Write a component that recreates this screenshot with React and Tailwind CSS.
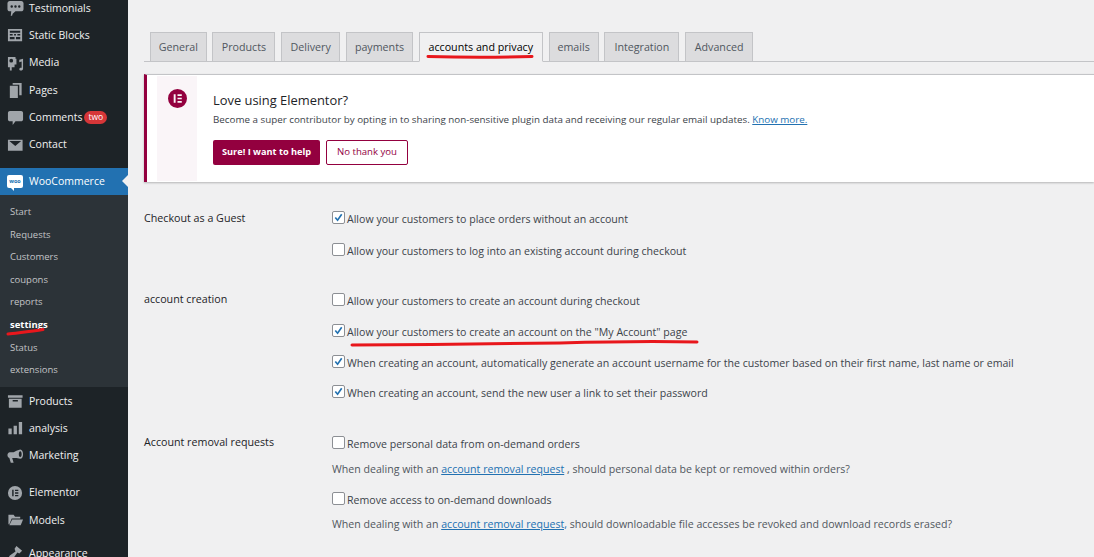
const FONT = "font-['Open_Sans','Noto_Sans',sans-serif]";

const icons = {
  testimonials: (
    <path d="M3 1h12c1.500 0 2.500 1 2.500 2.500v6C17.500 11 16.500 12 15 12H9l-3 2.500-.5 2-1.500.5.500-5H3c-1.500 0-2.500-1-2.500-2.500v-6C.5 2 1.500 1 3 1zm2 4.500a1.300 1.300 0 100 2.600 1.300 1.300 0 000-2.600zm4 0a1.300 1.300 0 100 2.600 1.300 1.300 0 000-2.600zm4 0a1.300 1.300 0 100 2.600 1.300 1.300 0 000-2.600z" fillRule="evenodd" />
  ),
  blocks: (
    <path d="M1 2h15v13H1V2zm2 2v2h11V4H3zm0 3.500V9h3V7.500H3zm4.500 0V9h2V7.500h-2zm3.500 0V9h3V7.500h-3zM3 10.500V13h5v-2.500H3zm6.500 0V13H14v-2.500H9.500z" fillRule="evenodd" />
  ),
  media: (
    <path d="M1 2h8v2h1v6H8v3H5v3.500H3V13H1V2zm3.500 2a2 2 0 100 4 2 2 0 000-4zM13 5l4-1v10.500c0 1.200-1 2-2.200 2-1 0-1.800-.6-1.800-1.500s.8-1.500 1.800-1.500c.2 0 .4 0 .7.100V7l-2.500.6V5z" fillRule="evenodd" />
  ),
  pages: (
    <path d="M6 1h9.500v13H13V3H6V1zM3 4h8.500v13H3V4z" />
  ),
  comments: (
    <path d="M3 2h12c1 0 2 1 2 2v7c0 1-1 2-2 2H9l-3 4v-4H3c-1 0-2-1-2-2V4c0-1 1-2 2-2z" />
  ),
  contact: (
    <path d="M1 3h15.500v11.500H1V3zm1.500 1.300L8.750 9.500 15 4.300H2.500z" fillRule="evenodd" />
  ),
  products: (
    <path d="M1 2.500h15.500V5H1V2.500zM2 6h13.500v9.500H2V6zm4 1.500V9h5.500V7.500H6z" fillRule="evenodd" />
  ),
  analysis: (
    <path d="M1.500 9h3.500v6H1.500V9zM7 6h3.500v9H7V6zm5.500-4H16v13h-3.500V2z" />
  ),
  marketing: (
    <path d="M10 3l4-1.500c2 0 3 2.500 3 5s-1 5-3 5L10 10.500H5.500L7 15.500H4L2.500 10.500C1 10 .5 9 .5 7.500S1.500 4.500 3 4.500h4L10 3zm4 .5c-1 0-1.500 1.500-1.500 3s.5 3 1.500 3 1.500-1.500 1.500-3-.5-3-1.500-3z" fillRule="evenodd" />
  ),
  elementor: (
    <path d="M8.500 1a7.500 7.500 0 100 15 7.500 7.500 0 000-15zM5.500 5H7v7H5.500V5zm3 0H12v1.400H8.500V5zm0 2.800H12v1.400H8.500V7.800zm0 2.800H12V12H8.500v-1.400z" fillRule="evenodd" />
  ),
  models: (
    <path d="M1.500 3H7l1.500 2H14v2H5L2.500 13 1.500 13V3zM5.500 8H17l-2.500 6H2.500l3-6z" />
  ),
  appearance: (
    <path d="M10 1l6 5-3 3-2-1-5 7c-1 1-3 .5-3.500-.5S2 12 3 11l6-4-1-3 2-3z" />
  ),
};

function MenuIcon({ name }) {
  return (
    <svg viewBox="0 0 18 18" className="w-[17px] h-[17px] fill-[#a0a5aa] shrink-0">
      {icons[name]}
    </svg>
  );
}

function MenuItem({ icon, label, badge }) {
  return (
    <div className="h-[27.3px] flex items-center pl-[7px] gap-[5px] text-[#f0f0f1] text-[10.5px]">
      <MenuIcon name={icon} />
      <span>{label}</span>
      {badge && (
        <span className="bg-[#d63638] text-white text-[8.5px] leading-[12px] h-[13px] px-[4px] rounded-full -ml-[3px]">
          {badge}
        </span>
      )}
    </div>
  );
}

function SubItem({ label, active }) {
  return (
    <div className={`h-[22.6px] flex items-center pl-[10px] text-[9.5px] ${active ? "text-white font-bold" : "text-[#c3c4c7]"}`}>
      {label}
    </div>
  );
}

function Sidebar() {
  return (
    <div className="w-[128px] shrink-0 bg-[#1d2327] h-[562px] overflow-hidden -mt-[5px]">
      <MenuItem icon="testimonials" label="Testimonials" />
      <MenuItem icon="blocks" label="Static Blocks" />
      <MenuItem icon="media" label="Media" />
      <MenuItem icon="pages" label="Pages" />
      <MenuItem icon="comments" label="Comments" badge="two" />
      <MenuItem icon="contact" label="Contact" />
      <div className="h-[9px]" />
      <div className="relative h-[27px] bg-[#2271b1] flex items-center pl-[7px] pt-[1px] gap-[6px] text-white text-[10.5px]">
        <div className="relative w-[16px] h-[13px] -mt-[1px] bg-white rounded-[2px] flex items-center justify-center text-[#2271b1] text-[5.5px] font-bold shrink-0">
          woo
          <div className="absolute left-[4px] -bottom-[3px] border-t-[3px] border-t-white border-l-[3px] border-l-transparent" />
        </div>
        <span>WooCommerce</span>
        <div className="absolute right-0 top-[7px] border-y-[6px] border-y-transparent border-r-[6px] border-r-[#f0f0f1]" />
      </div>
      <div className="bg-[#2c3338] h-[192px] pt-[6px] mb-[1px]">
        <SubItem label="Start" />
        <SubItem label="Requests" />
        <SubItem label="Customers" />
        <SubItem label="coupons" />
        <SubItem label="reports" />
        <SubItem label="settings" active />
        <SubItem label="Status" />
        <SubItem label="extensions" />
      </div>
      <MenuItem icon="products" label="Products" />
      <MenuItem icon="analysis" label="analysis" />
      <MenuItem icon="marketing" label="Marketing" />
      <div className="h-[10px]" />
      <MenuItem icon="elementor" label="Elementor" />
      <MenuItem icon="models" label="Models" />
      <div className="h-[6px]" />
      <MenuItem icon="appearance" label="Appearance" />
    </div>
  );
}

const tabs = [
  ["General", "w-[56.6px]"],
  ["Products", "w-[63px]"],
  ["Delivery", "w-[59px]"],
  ["payments", "w-[67px]"],
  ["accounts and privacy", "w-[124px]", true],
  ["emails", "w-[50px]"],
  ["Integration", "w-[75px]"],
  ["Advanced", "w-[68px]"],
];

function Tabs() {
  return (
    <div className="mt-[32px] ml-[16px] h-[30px] border-b border-[#c3c4c7] flex pl-[6px] gap-[5.8px]">
      {tabs.map(([label, width, active]) => (
        <div
          key={label}
          className={`${width} h-[30px] border border-[#c3c4c7] flex items-center justify-center pt-[1px] text-[10.7px] font-medium ${
            active ? "bg-[#f0f0f1] border-b-[#f0f0f1] text-black" : "bg-[#dcdcde] text-[#50575e]"
          }`}
        >
          {label}
        </div>
      ))}
    </div>
  );
}

function Notice() {
  return (
    <div className="mt-[12px] ml-[16px] h-[108px] bg-white border-l-[3px] border-l-[#93003f] border-t border-t-[#c3c4c7] shadow-[0_1px_2px_rgba(0,0,0,0.25)] flex pl-[10px] pt-[1px]">
      <div className="w-[40px] h-[105px] bg-[#faf5f8] flex justify-center pt-[13px] shrink-0">
        <svg viewBox="0 0 20 20" className="w-[19px] h-[19px] fill-[#93003f]">
          <path fillRule="evenodd" d="M10 0a10 10 0 100 20 10 10 0 000-20zM6 5.500h2v9H6v-9zm4 0h4.500v1.800H10V5.500zm0 3.600h4.500v1.800H10V9.100zm0 3.600h4.500v1.800H10v-1.800z" />
        </svg>
      </div>
      <div className="ml-[16px] pt-[14px]">
        <div className="text-[12.9px] leading-[20px] font-medium text-[#1d2327]">Love using Elementor?</div>
        <div className="mt-[3px] text-[9.8px] leading-[14px] text-[#3c434a] whitespace-nowrap">
          Become a super contributor by opting in to sharing non-sensitive plugin data and receiving our regular email updates.{" "}
          <span className="text-[#2271b1] underline">Know more.</span>
        </div>
        <div className="mt-[13px] flex gap-[6px]">
          <div className="w-[107px] h-[25px] bg-[#93003f] rounded-[2px] text-white text-[9.2px] font-bold flex items-center justify-center pb-[2px]">
            Sure! I want to help
          </div>
          <div className="w-[82px] h-[25px] bg-white border border-[#93003f] rounded-[2px] text-[#93003f] text-[9.6px] flex items-center justify-center">
            No thank you
          </div>
        </div>
      </div>
    </div>
  );
}

function Check({ checked, label, className }) {
  return (
    <div className={`flex items-center h-[16px] text-[10.6px] text-[#3c434a] whitespace-nowrap ${className}`}>
      <div className="w-[13px] h-[13px] -mt-[5px] bg-white border border-[#8c8f94] rounded-[2px] mr-[2px] shrink-0 flex items-center justify-center">
        {checked && (
          <svg viewBox="0 0 12 12" className="w-[11px] h-[11px]">
            <path d="M2.500 6l2.500 3 4.500-6.500" fill="none" stroke="#2271b1" strokeWidth="1.800" />
          </svg>
        )}
      </div>
      {label}
    </div>
  );
}

function Help({ before, link, after, className }) {
  return (
    <div className={`h-[16px] text-[10.6px] leading-[16px] text-[#50575e] whitespace-nowrap ${className}`}>
      {before} <span className="text-[#2271b1] underline">{link}</span> {after}
    </div>
  );
}

function Section({ label, children, className }) {
  return (
    <div className={`flex ml-[16px] ${className}`}>
      <div className="w-[188px] shrink-0 text-[10.7px] leading-[16px] font-medium text-[#1d2327]">{label}</div>
      <div>{children}</div>
    </div>
  );
}

export default function App() {
  return (
    <div className={`relative flex w-[1094px] h-[557px] overflow-hidden bg-[#f0f0f1] ${FONT}`}>
      <Sidebar />
      <div className="flex-1 min-w-0">
        <Tabs />
        <Notice />
        <Section label="Checkout as a Guest" className="mt-[28px]">
          <Check checked label="Allow your customers to place orders without an account" className="mt-[2px]" />
          <Check label="Allow your customers to log into an existing account during checkout" className="mt-[16px]" />
        </Section>
        <Section label="account creation" className="mt-[31px]">
          <Check label="Allow your customers to create an account during checkout" className="mt-[3px]" />
          <Check checked label={'Allow your customers to create an account on the "My Account" page'} className="mt-[14.500px]" />
          <Check checked label="When creating an account, automatically generate an account username for the customer based on their first name, last name or email" className="mt-[15px]" />
          <Check checked label="When creating an account, send the new user a link to set their password" className="mt-[14px]" />
        </Section>
        <Section label="Account removal requests" className="mt-[32px]">
          <Check label="Remove personal data from on-demand orders" className="mt-[3px]" />
          <Help className="mt-[8px]" before="When dealing with an" link="account removal request" after=", should personal data be kept or removed within orders?" />
          <Check label="Remove access to on-demand downloads" className="mt-[16px]" />
          <Help className="mt-[7px]" before="When dealing with an" link="account removal request," after="should downloadable file accesses be revoked and download records erased?" />
        </Section>
      </div>
      <svg className="absolute left-0 top-0 w-[1094px] h-[557px] pointer-events-none" viewBox="0 0 1094 557">
        <path d="M428 56.500C460 57.500 500 57.500 532 56.500" stroke="#e8171c" strokeWidth="3" strokeLinecap="round" fill="none" />
        <path d="M8 334C20 332.500 32 331.500 43 329.500" stroke="#e8171c" strokeWidth="3" strokeLinecap="round" fill="none" />
        <path d="M352 345C420 345 500 343.500 560 343C610 341.500 660 341 697 342" stroke="#e8171c" strokeWidth="3" strokeLinecap="round" fill="none" />
      </svg>
    </div>
  );
}
